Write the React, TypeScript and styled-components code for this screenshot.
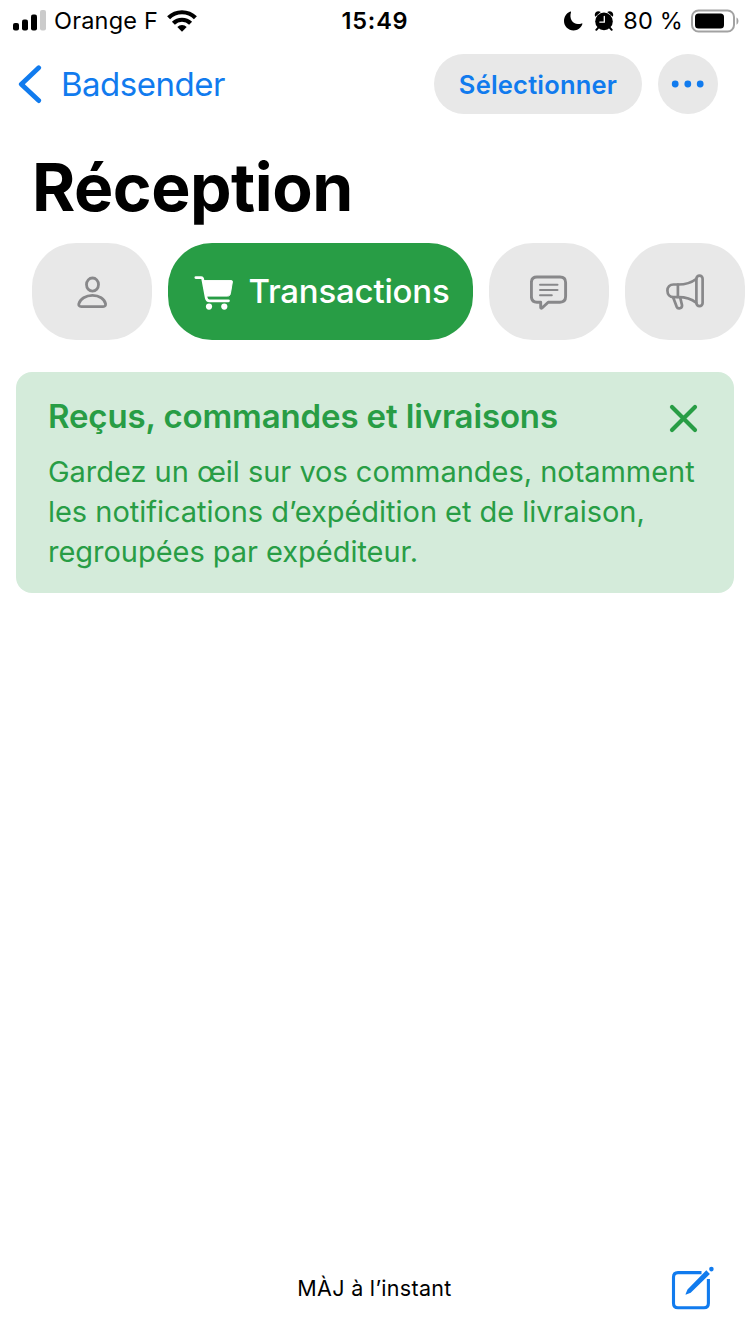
import React from 'react';
import styled, { createGlobalStyle } from 'styled-components';

const blue = '#117bee';
const green = '#289d45';
const grey = '#e8e8e8';
const iconGrey = '#88888a';

const GlobalStyle = createGlobalStyle`
  *, *::before, *::after { box-sizing: border-box; }
  body {
    margin: 0;
    background: #fff;
    color: #000;
    font-family: Inter, 'Liberation Sans', sans-serif;
  }
  button { font: inherit; color: inherit; border: 0; padding: 0; background: none; }
  h1, h2, p { margin: 0; }
  svg { display: block; flex: none; }
`;

const Screen = styled.div`
  display: flex;
  flex-direction: column;
  width: 750px;
  height: 1334px;
  overflow: hidden;
`;

const StatusBar = styled.header`
  display: grid;
  grid-template-columns: 1fr auto 1fr;
  align-items: center;
  height: 41px;
  padding: 0 11px 0 13px;
  font-size: 23.5px;
  line-height: 41px;
  white-space: pre;
`;

const StatusGroup = styled.div<{ $end?: boolean }>`
  display: flex;
  align-items: center;
  justify-content: ${(p) => (p.$end ? 'flex-end' : 'flex-start')};
`;

const StatusIcons = styled.div`
  display: flex;
  align-items: center;
  gap: 11px;
`;

const Carrier = styled.span`
  margin: 0 9px 0 8px;
  letter-spacing: 0.2px;
`;

const Clock = styled.span`
  padding-right: 2px;
  font-size: 23.5px;
  font-weight: 600;
  letter-spacing: 0.8px;
`;

const BatteryLevel = styled.span`
  margin: 0 8px 0 9px;
  letter-spacing: 0.2px;
`;

const NavBar = styled.nav`
  display: flex;
  align-items: center;
  height: 86px;
  padding: 0 32px 0 18px;
`;

const BackButton = styled.button`
  display: flex;
  align-items: center;
  gap: 19px;
  margin-right: auto;
  color: ${blue};
  font-size: 33px;
  letter-spacing: -0.5px;
`;

const PillButton = styled.button<{ $width: number }>`
  display: flex;
  align-items: center;
  justify-content: center;
  width: ${(p) => p.$width}px;
  height: 60.5px;
  margin-left: 16px;
  border-radius: 31px;
  background: ${grey};
  color: ${blue};
  font-size: 25.5px;
  font-weight: 600;
  letter-spacing: 0.2px;
`;

const Title = styled.h1`
  height: 116px;
  margin: 2px 0 -2px;
  padding-left: 32px;
  font-size: 66px;
  font-weight: 700;
  line-height: 116px;
  letter-spacing: -0.5px;
`;

const Tabs = styled.div`
  display: flex;
  gap: 16px;
  height: 97px;
  padding-left: 32px;
`;

const Tab = styled.button<{ $active?: boolean }>`
  display: flex;
  flex: none;
  align-items: center;
  justify-content: center;
  gap: 14px;
  width: ${(p) => (p.$active ? 305 : 120)}px;
  padding-left: ${(p) => (p.$active ? 3 : 0)}px;
  border-radius: 44px;
  background: ${(p) => (p.$active ? green : grey)};
  color: ${(p) => (p.$active ? '#fff' : iconGrey)};
  font-size: 33px;
  font-weight: 450;
  line-height: 40px;
  letter-spacing: -0.2px;
`;

const TabLabel = styled.span`
  padding-bottom: 1px;
`;

const Notice = styled.section`
  height: 221px;
  margin: 32px 16px 0;
  padding: 24px 36px 0 32px;
  border-radius: 16px;
  background: #d4ebda;
  color: ${green};
`;

const NoticeHeader = styled.div`
  display: flex;
  align-items: center;
  justify-content: space-between;
  height: 40px;
`;

const NoticeTitle = styled.h2`
  font-size: 33px;
  font-weight: 600;
  line-height: 40px;
  letter-spacing: -0.13px;
`;

const CloseButton = styled.button`
  padding-top: 4px;
`;

const NoticeText = styled.p`
  margin-top: 16px;
  font-size: 29px;
  line-height: 40px;
  letter-spacing: -0.03px;
  white-space: nowrap;
`;

const Footer = styled.footer`
  display: grid;
  grid-template-columns: 1fr auto 1fr;
  align-items: center;
  height: 92px;
  margin-top: auto;
  padding-right: 36px;
`;

const FooterStatus = styled.p`
  grid-column: 2;
  padding-left: 35px;
  font-size: 21.5px;
  letter-spacing: 0.31px;
`;

const ComposeButton = styled.button`
  justify-self: end;
  color: ${blue};
`;

const SignalIcon = () => (
  <svg width="33" height="21" viewBox="0 0 33 21">
    <rect x="0" y="13" width="6" height="7.5" rx="2" />
    <rect x="9" y="9.5" width="6" height="11" rx="2" />
    <rect x="18" y="4.5" width="6" height="16" rx="2" />
    <rect x="27" y="0" width="6" height="20.5" rx="2" fill="#cbcbcb" />
  </svg>
);

const WifiIcon = () => (
  <svg width="30" height="22" viewBox="0 0 30 22" fill="none" stroke="#000" strokeWidth="4.200">
    <path d="M1.600 7.800a19 19 0 0 1 26.800 0" />
    <path d="M6.400 13.300a12.200 12.200 0 0 1 17.200 0" />
    <path d="M15 21.700l-4.700-4.800a6.700 6.700 0 0 1 9.400 0z" fill="#000" stroke="none" />
  </svg>
);

const MoonIcon = () => (
  <svg width="19" height="20" viewBox="0 0 19 20">
    <path d="M6.300.6c.5-.2.900.2.700.7C5 7.500 8.500 13 14 13c1.400 0 2.600-.2 3.700-.6.5-.2.900.2.700.7C17 17 13.600 19.500 9.600 19.500 4.300 19.500 0 15.400 0 10.100 0 5.800 2.500 2.200 6.300.6z" />
  </svg>
);

const AlarmIcon = () => (
  <svg width="20" height="20" viewBox="0 0 20 20">
    <circle cx="10" cy="10.400" r="8.800" />
    <path d="M1.300 5.800C-.6 2.200 3-1.200 6.800 1zM18.700 5.800C20.600 2.200 17-1.200 13.200 1z" />
    <path d="M4.300 16.600L2.300 18.800M15.700 16.600l2 2.200" stroke="#000" strokeWidth="2" strokeLinecap="round" />
    <path d="M10.300 5.500v5.600H5.800" fill="none" stroke="#fff" strokeWidth="1.300" strokeLinecap="round" />
  </svg>
);

const BatteryIcon = () => (
  <svg width="48" height="24" viewBox="0 0 48 24">
    <rect x="1" y="1.500" width="42" height="21" rx="6.500" fill="none" stroke="#a2a2a2" strokeWidth="2" />
    <rect x="4" y="4.500" width="29" height="15" rx="3.500" />
    <path d="M45.500 8.500c2.600 1.200 2.600 6 0 7.200z" fill="#a2a2a2" />
  </svg>
);

const ChevronIcon = () => (
  <svg width="24" height="40" viewBox="0 0 24 40" fill="none" stroke="currentColor" strokeWidth="4.800" strokeLinecap="round" strokeLinejoin="round">
    <path d="M20.700 3.800L3.300 20.200 20.700 36.600" />
  </svg>
);

const DotsIcon = () => (
  <svg width="34" height="8" viewBox="0 0 34 8" fill="currentColor">
    <circle cx="4.200" cy="4" r="3.400" />
    <circle cx="16.800" cy="4" r="3.400" />
    <circle cx="29.200" cy="4" r="3.400" />
  </svg>
);

const PersonIcon = () => (
  <svg width="30" height="32" viewBox="0 0 30 32" fill="none" stroke="currentColor" strokeWidth="2.800">
    <ellipse cx="15.500" cy="8.600" rx="6" ry="6.600" />
    <path d="M4.300 30.600C2.300 30.600 1.500 29.300 1.900 27.600 3.200 22.800 8.700 19.400 15.500 19.400s11.900 3.400 13 8.200c.3 1.700-.4 3-2.400 3z" />
  </svg>
);

const CartIcon = () => (
  <svg width="40" height="36" viewBox="0 0 40 36" fill="none" stroke="currentColor" strokeWidth="2.700" strokeLinecap="round" strokeLinejoin="round">
    <path d="M1.800 3.600h5.400c.9 0 1.300.4 1.500 1.300l3.500 18.800c.4 2.100 1.400 3.100 3.300 3.100H34.500" />
    <path d="M9.300 6.600h28.200c.7 0 1 .5.900 1.200l-2 11.800c-.3 1.700-1.200 2.500-2.800 2.500H12.200z" fill="currentColor" strokeWidth="1" />
    <circle cx="15" cy="32.600" r="3.100" fill="currentColor" stroke="none" />
    <circle cx="30.300" cy="32.600" r="3.100" fill="currentColor" stroke="none" />
  </svg>
);

const MessageIcon = () => (
  <svg width="38" height="36" viewBox="0 0 38 36" fill="none" stroke="currentColor" strokeWidth="2.900" strokeLinecap="round" strokeLinejoin="round">
    <path d="M7 3h23c3.500 0 5.600 2.100 5.600 5.600v14c0 3.500-2.100 5.600-5.600 5.600H18.200l-6.200 5.800c-.6.500-1.300.3-1.300-.5v-5.300H7c-3.500 0-5.600-2.100-5.600-5.600v-14C1.400 5.100 3.500 3 7 3z" />
    <path d="M10 10.700h17.500M10 16h17.500M10 21.200h11.800" strokeWidth="2" />
  </svg>
);

const MegaphoneIcon = () => (
  <svg width="38" height="36" viewBox="0 0 38 36" fill="none" stroke="currentColor" strokeWidth="2.700" strokeLinecap="round" strokeLinejoin="round">
    <rect x="30.400" y="1.600" width="6.200" height="30.600" rx="3.100" />
    <path d="M30.200 5C25 9 19.500 10.500 12.400 10.500H7.600C3.800 10.500 1.400 12.800 1.400 16.600s2.400 6.600 6.200 6.600h4.800c7.100 0 12.600 1.400 17.800 5.600" />
    <path d="M11.900 10.700v12.300" />
    <path d="M7.200 23.600l3.400 9c1.300 3 5.800 1.900 5.400-1.500l-1.800-7.500" />
  </svg>
);

const CloseIcon = () => (
  <svg width="29" height="29" viewBox="0 0 29 29" fill="none" stroke="currentColor" strokeWidth="4.200" strokeLinecap="round">
    <path d="M3 3l23 23M26 3L3 26" />
  </svg>
);

const ComposeIcon = () => (
  <svg width="44" height="44" viewBox="0 0 44 44" fill="none" stroke="currentColor" strokeWidth="3.100">
    <path d="M31.500 6.600H8C4.900 6.600 3.500 8.200 3.500 11.200v26c0 3 1.400 4.600 4.500 4.600h26c3 0 4.400-1.600 4.400-4.600V13" />
    <path d="M36.300 4.300l3.600 3.600L20.700 26.700l-4.500 1.900c-.4.200-.8-.2-.6-.6l1.900-4.500z" fill="currentColor" stroke="none" />
    <circle cx="41.400" cy="3.100" r="2.300" fill="currentColor" stroke="none" />
  </svg>
);

export default function App() {
  return (
    <Screen>
      <GlobalStyle />
      <StatusBar>
        <StatusGroup>
          <SignalIcon />
          <Carrier>Orange F</Carrier>
          <WifiIcon />
        </StatusGroup>
        <Clock>15:49</Clock>
        <StatusGroup $end>
          <StatusIcons>
            <MoonIcon />
            <AlarmIcon />
          </StatusIcons>
          <BatteryLevel>80 %</BatteryLevel>
          <BatteryIcon />
        </StatusGroup>
      </StatusBar>
      <NavBar>
        <BackButton>
          <ChevronIcon />
          Badsender
        </BackButton>
        <PillButton $width={208}>Sélectionner</PillButton>
        <PillButton $width={60} aria-label="Plus">
          <DotsIcon />
        </PillButton>
      </NavBar>
      <Title>Réception</Title>
      <Tabs>
        <Tab aria-label="Principal">
          <PersonIcon />
        </Tab>
        <Tab $active>
          <CartIcon />
          <TabLabel>Transactions</TabLabel>
        </Tab>
        <Tab aria-label="Actualités">
          <MessageIcon />
        </Tab>
        <Tab aria-label="Promotions">
          <MegaphoneIcon />
        </Tab>
      </Tabs>
      <Notice>
        <NoticeHeader>
          <NoticeTitle>Reçus, commandes et livraisons</NoticeTitle>
          <CloseButton aria-label="Fermer">
            <CloseIcon />
          </CloseButton>
        </NoticeHeader>
        <NoticeText>
          Gardez un œil sur vos commandes, notamment
          <br />
          les notifications d’expédition et de livraison,
          <br />
          regroupées par expéditeur.
        </NoticeText>
      </Notice>
      <Footer>
        <FooterStatus>MÀJ à l’instant</FooterStatus>
        <ComposeButton aria-label="Nouveau message">
          <ComposeIcon />
        </ComposeButton>
      </Footer>
    </Screen>
  );
}
